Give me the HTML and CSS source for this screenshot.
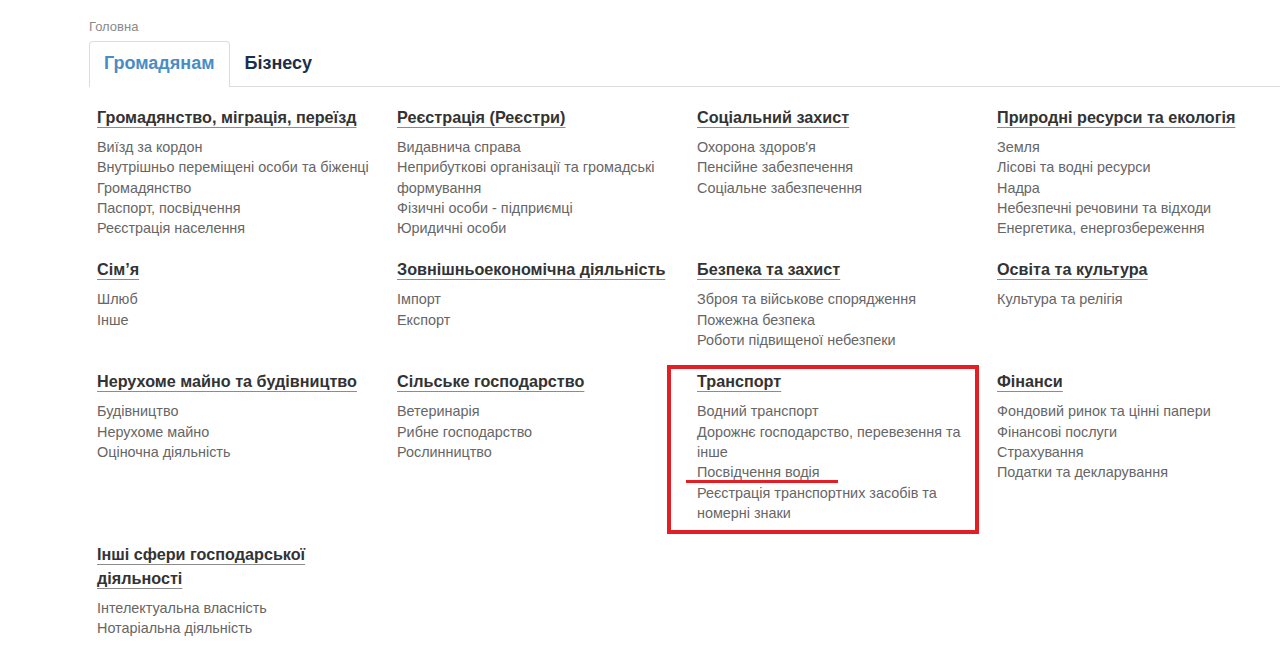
FILE: index.html
```html
<!DOCTYPE html>
<html lang="uk">
<head>
<meta charset="utf-8">
<title>Головна</title>
<link rel="stylesheet" href="styles.css">
</head>
<body>
<div class="page">
  <div class="breadcrumb">Головна</div>
  <div class="tabs">
    <div class="tab active">Громадянам</div>
    <div class="tab">Бізнесу</div>
  </div>
  <div class="grid">
    <section class="cat">
      <h3><span>Громадянство, міграція, переїзд</span></h3>
      <ul>
        <li>Виїзд за кордон</li>
        <li>Внутрішньо переміщені особи та біженці</li>
        <li>Громадянство</li>
        <li>Паспорт, посвідчення</li>
        <li>Реєстрація населення</li>
      </ul>
    </section>
    <section class="cat">
      <h3><span>Реєстрація (Реєстри)</span></h3>
      <ul>
        <li>Видавнича справа</li>
        <li>Неприбуткові організації та громадські формування</li>
        <li>Фізичні особи - підприємці</li>
        <li>Юридичні особи</li>
      </ul>
    </section>
    <section class="cat">
      <h3><span>Соціальний захист</span></h3>
      <ul>
        <li>Охорона здоров'я</li>
        <li>Пенсійне забезпечення</li>
        <li>Соціальне забезпечення</li>
      </ul>
    </section>
    <section class="cat">
      <h3><span>Природні ресурси та екологія</span></h3>
      <ul>
        <li>Земля</li>
        <li>Лісові та водні ресурси</li>
        <li>Надра</li>
        <li>Небезпечні речовини та відходи</li>
        <li>Енергетика, енергозбереження</li>
      </ul>
    </section>

    <section class="cat">
      <h3><span>Сім’я</span></h3>
      <ul>
        <li>Шлюб</li>
        <li>Інше</li>
      </ul>
    </section>
    <section class="cat">
      <h3><span>Зовнішньоекономічна діяльність</span></h3>
      <ul>
        <li>Імпорт</li>
        <li>Експорт</li>
      </ul>
    </section>
    <section class="cat">
      <h3><span>Безпека та захист</span></h3>
      <ul>
        <li>Зброя та військове спорядження</li>
        <li>Пожежна безпека</li>
        <li>Роботи підвищеної небезпеки</li>
      </ul>
    </section>
    <section class="cat">
      <h3><span>Освіта та культура</span></h3>
      <ul>
        <li>Культура та релігія</li>
      </ul>
    </section>

    <section class="cat">
      <h3><span>Нерухоме майно та будівництво</span></h3>
      <ul>
        <li>Будівництво</li>
        <li>Нерухоме майно</li>
        <li>Оціночна діяльність</li>
      </ul>
    </section>
    <section class="cat">
      <h3><span>Сільське господарство</span></h3>
      <ul>
        <li>Ветеринарія</li>
        <li>Рибне господарство</li>
        <li>Рослинництво</li>
      </ul>
    </section>
    <section class="cat">
      <h3><span>Транспорт</span></h3>
      <ul>
        <li>Водний транспорт</li>
        <li>Дорожнє господарство, перевезення та інше</li>
        <li>Посвідчення водія</li>
        <li>Реєстрація транспортних засобів та номерні знаки</li>
      </ul>
    </section>
    <section class="cat">
      <h3><span>Фінанси</span></h3>
      <ul>
        <li>Фондовий ринок та цінні папери</li>
        <li>Фінансові послуги</li>
        <li>Страхування</li>
        <li>Податки та декларування</li>
      </ul>
    </section>

    <section class="cat">
      <h3><span>Інші сфери господарської діяльності</span></h3>
      <ul>
        <li>Інтелектуальна власність</li>
        <li>Нотаріальна діяльність</li>
      </ul>
    </section>
  </div>
</div>
<div class="mark-box"></div>
<div class="mark-line"></div>
</body>
</html>
```
FILE: styles.css
```css
html, body {
  margin: 0;
  padding: 0;
  background: #fff;
}
body {
  font-family: "Liberation Sans", Arial, sans-serif;
  color: #333;
}
.page {
  padding: 19px 0 0 89px;
}
.breadcrumb {
  font-size: 13px;
  line-height: 15px;
  color: #8a8a8a;
}
.tabs {
  display: flex;
  margin-top: 7px;
  border-bottom: 1px solid #dcdcdc;
  height: 45px;
}
.tab {
  padding: 0 14px;
  font-size: 18px;
  font-weight: bold;
  line-height: 43px;
  color: #1c2f4a;
  border: 1px solid transparent;
  border-bottom: none;
  border-radius: 4px 4px 0 0;
}
.tab.active {
  color: #4a8cc6;
  border-color: #dcdcdc;
  background: #fff;
  height: 45px;
  margin-bottom: -1px;
}
.grid {
  display: grid;
  grid-template-columns: repeat(4, 300px);
  row-gap: 19px;
  padding: 18px 0 0 8px;
}
.cat h3 {
  margin: 0;
  font-size: 16.2px;
  line-height: 24px;
  font-weight: bold;
  color: #333;
}
.cat h3 span {
  text-decoration: underline;
  text-decoration-color: #8c8c8c;
  text-decoration-thickness: 1px;
  text-underline-offset: 4px;
}
.cat ul {
  list-style: none;
  margin: 8px 0 0;
  padding: 0 24px 0 0;
  font-size: 14.4px;
  line-height: 20.3px;
  color: #666;
}
.cat:nth-child(13) h3 {
  width: 220px;
}
.mark-box {
  position: absolute;
  left: 667px;
  top: 365px;
  width: 304px;
  height: 161px;
  border: 4px solid #e31e24;
}
.mark-line {
  position: absolute;
  left: 686px;
  top: 480px;
  width: 152px;
  height: 3px;
  background: #e31e24;
}
```
